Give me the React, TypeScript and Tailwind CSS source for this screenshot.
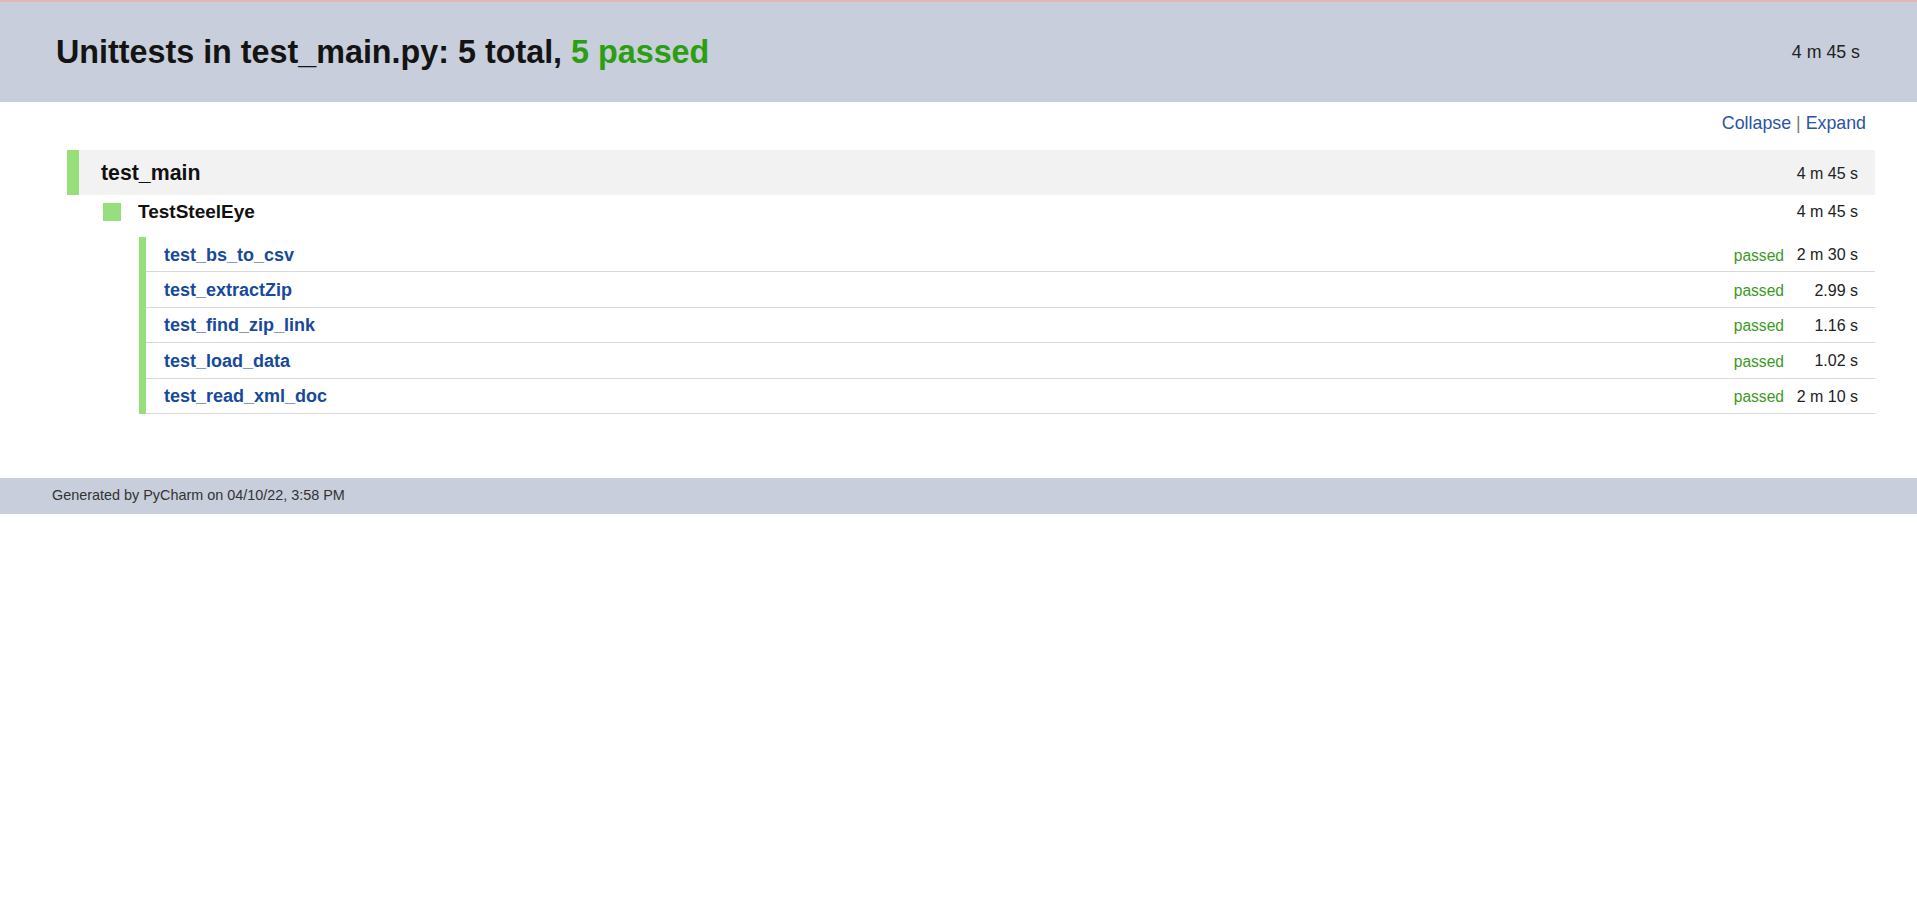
const tests = [
    { name: "test_bs_to_csv", time: "2 m 30 s" },
    { name: "test_extractZip", time: "2.99 s" },
    { name: "test_find_zip_link", time: "1.16 s" },
    { name: "test_load_data", time: "1.02 s" },
    { name: "test_read_xml_doc", time: "2 m 10 s" },
];

const App = () => {
    return (
        <div className="min-h-screen bg-white font-['Liberation_Sans',Arial,sans-serif] text-[#1a1a1a]">
            <div className="border-t-2 border-[#e6b7ae] bg-[#c8cedb] h-[102px] flex items-center justify-between pl-[56px] pr-[57px]">
                <h1 className="text-[32.3px] font-bold leading-none text-[#141414]">
                    Unittests in test_main.py: 5 total,{" "}
                    <span className="text-[#2b9e12]">5 passed</span>
                </h1>
                <span className="text-[17.8px] text-[#222]">4 m 45 s</span>
            </div>

            <div className="flex justify-end pr-[51px] pt-[11px] h-[48px] text-[17.8px] leading-[20px] text-[#2a54a5]">
                <a href="#">Collapse</a>
                <span className="mx-[5px] text-[#777]">|</span>
                <a href="#">Expand</a>
            </div>

            <div className="ml-[67px] mr-[42px]">
                <div className="h-[45px] bg-[#f2f2f2] border-l-[12px] border-[#97df7b] flex items-center justify-between pl-[22px] pr-[17px] pt-[2px]">
                    <span className="text-[21.3px] font-bold text-[#111]">test_main</span>
                    <span className="text-[16px] text-[#222]">4 m 45 s</span>
                </div>

                <div className="h-[34px] flex items-center pl-[36px] pr-[17px]">
                    <div className="w-[18px] h-[18px] bg-[#97df7b]" />
                    <span className="ml-[17px] text-[19px] font-bold text-[#111]">TestSteelEye</span>
                    <span className="ml-auto text-[16px] text-[#222]">4 m 45 s</span>
                </div>

                <div className="mt-[8px] ml-[72px] flex">
                    <div className="w-[7px] bg-[#97df7b]" />
                    <div className="flex-1">
                        {tests.map((t) => (
                            <div
                                key={t.name}
                                className="h-[35.4px] border-b border-[#d9d9d9] flex items-center pl-[18px] pr-[17px] pt-[2px]"
                            >
                                <a href="#" className="text-[18px] font-bold text-[#17499c]">
                                    {t.name}
                                </a>
                                <span className="ml-auto text-[15.6px] text-[#3b9a1c]">passed</span>
                                <span className="w-[62px] ml-[12px] text-right text-[16px] text-[#222]">
                                    {t.time}
                                </span>
                            </div>
                        ))}
                    </div>
                </div>
            </div>

            <div className="mt-[64px] h-[36px] bg-[#c8cedb] flex items-center pl-[52px] text-[14.4px] text-[#333]">
                Generated by PyCharm on 04/10/22, 3:58 PM
            </div>
        </div>
    );
};

export default App;
